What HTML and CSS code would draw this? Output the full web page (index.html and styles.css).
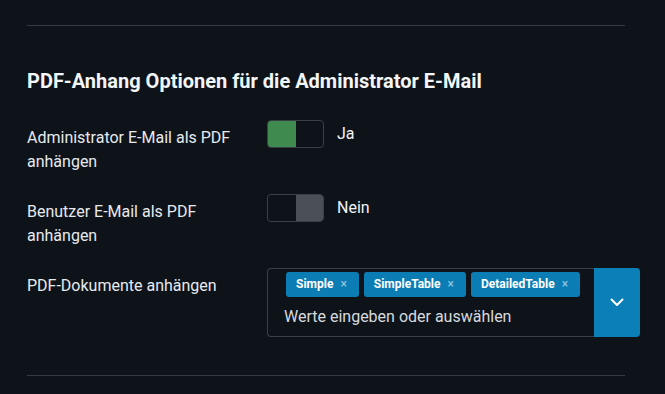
FILE: index.html
```html
<!DOCTYPE html>
<html>
<head>
	<title>PDF-Anhang Optionen</title>
	<link rel="stylesheet" href="styles.css">
</head>
<body>
	<div class="page">
		<hr class="rule">

		<h2 class="section-title">PDF-Anhang Optionen für die Administrator E-Mail</h2>

		<div class="row">
			<div class="label">Administrator E-Mail als PDF anhängen</div>
			<div class="control">
				<div class="toggle on">
					<span class="half"></span><span class="half"></span>
				</div>
				<span class="toggle-text">Ja</span>
			</div>
		</div>

		<div class="row">
			<div class="label">Benutzer E-Mail als PDF anhängen</div>
			<div class="control">
				<div class="toggle off">
					<span class="half"></span><span class="half"></span>
				</div>
				<span class="toggle-text">Nein</span>
			</div>
		</div>

		<div class="row">
			<div class="label">PDF-Dokumente anhängen</div>
			<div class="select">
				<div class="select-field">
					<div class="tags">
						<span class="tag">Simple<span class="tag-x">×</span></span>
						<span class="tag">SimpleTable<span class="tag-x">×</span></span>
						<span class="tag">DetailedTable<span class="tag-x">×</span></span>
					</div>
					<div class="placeholder">Werte eingeben oder auswählen</div>
				</div>
				<div class="select-button">
					<svg width="14" height="9" viewBox="0 0 14 9">
						<polyline points="1.5,1.5 7,7 12.5,1.5" fill="none" stroke="#ffffff" stroke-width="2" stroke-linecap="round" stroke-linejoin="round"/>
					</svg>
				</div>
			</div>
		</div>

		<hr class="rule bottom">
	</div>
</body>
</html>
```

FILE: styles.css
```css
/* general */
body {
	margin: 0;
	background-color: #0e131a;
	color: #e6eaef;
	font-family: Roboto, "Liberation Sans", sans-serif;
	font-size: 16px;
}
.page {
	padding: 25px 25px 0 27px;
}
.rule {
	margin: 0 15px 0 0;
	border: none;
	border-top: 1px solid #343a42;
	height: 0;
}
.rule.bottom {
	margin-top: 38px;
}
.section-title {
	margin: 43px 0 27px 0;
	font-size: 20px;
	line-height: 24px;
	font-weight: bold;
	color: #f3f6f9;
}
/* rows */
.row {
	display: flex;
	align-items: flex-start;
	margin-bottom: 20px;
}
.row:last-of-type {
	margin-bottom: 0;
}
.label {
	width: 215px;
	margin-right: 25px;
	padding-top: 6px;
	line-height: 24px;
	min-height: 48px;
}
.control {
	display: flex;
	align-items: center;
	gap: 13px;
}
/* toggles */
.toggle {
	display: flex;
	width: 55px;
	height: 26px;
	border: 1px solid #3b4048;
	border-radius: 4px;
	overflow: hidden;
}
.toggle .half {
	flex: 1;
}
.toggle.on .half:first-child {
	background-color: #3f8a4e;
}
.toggle.off .half:last-child {
	background-color: #4a4f57;
}
.toggle-text {
	line-height: 24px;
	color: #f0f3f6;
}
/* select */
.select {
	display: flex;
	width: 373px;
	height: 69px;
}
.select-field {
	flex: 1;
	border: 1px solid #3b4048;
	border-right: none;
	border-radius: 4px 0 0 4px;
	padding: 3px 0 0 16px;
}
.tags {
	display: flex;
	gap: 5px;
	margin-left: 2px;
}
.tag {
	background-color: #0b7db4;
	color: #ffffff;
	font-size: 12px;
	font-weight: bold;
	line-height: 25px;
	height: 25px;
	padding: 0 12px 0 10px;
	border-radius: 3px;
}
.tag-x {
	margin-left: 7px;
	font-weight: normal;
	color: #9cc9e2;
}
.placeholder {
	margin-top: 8px;
	line-height: 24px;
	color: #d6dade;
}
.select-button {
	width: 46px;
	background-color: #0b7fb8;
	border-radius: 0 4px 4px 0;
	display: flex;
	align-items: center;
	justify-content: center;
}
```
